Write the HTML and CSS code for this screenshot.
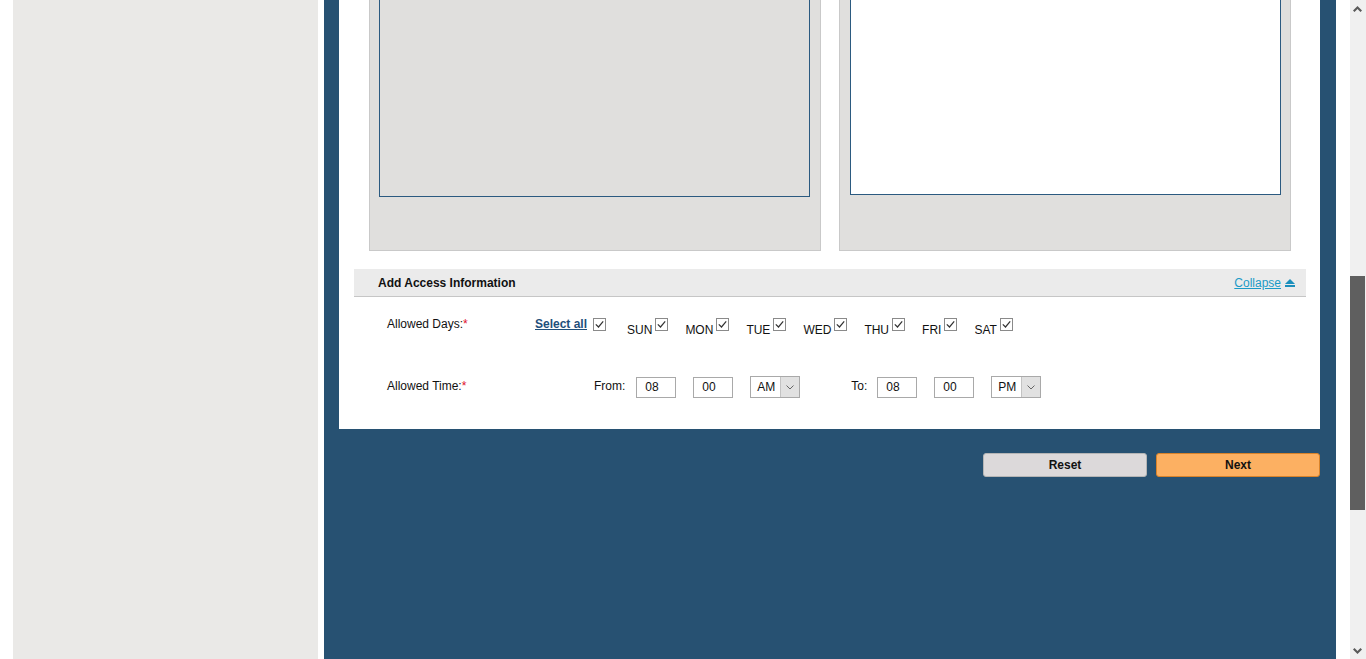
FILE: index.html
```html
<!DOCTYPE html>
<html lang="en">
<head>
<meta charset="utf-8">
<title>Add Access Information</title>
<link rel="stylesheet" href="styles.css">
</head>
<body>
<div class="page">
  <aside class="sidebar"></aside>
  <main class="main">
    <section class="card">
      <div class="panes">
        <div class="pane pane-left"><div class="list list-grey"></div></div>
        <div class="pane pane-right"><div class="list list-white"></div></div>
      </div>
      <div class="section">
        <div class="section-head">
          <span class="section-title">Add Access Information</span>
          <a class="collapse" href="#">Collapse</a>
          <svg class="collapse-icon" width="10" height="8" viewBox="0 0 10 8"><polygon points="5,0 10,5 0,5" fill="#1b8fbc"/><rect x="0" y="6" width="10" height="2" fill="#1b8fbc"/></svg>
        </div>
        <div class="form-row days-row">
          <div class="label">Allowed Days:<span class="req">*</span></div>
          <a class="select-all" href="#">Select all</a>
          <span class="cb sa-cb"><svg width="13" height="13" viewBox="0 0 13 13"><rect x="0.5" y="0.5" width="12" height="12" fill="#fff" stroke="#8a8a8a"/><path d="M2.8 6.3 L5.5 9 L10.2 3.3" fill="none" stroke="#333" stroke-width="1.2"/></svg></span>
          <div class="days">
            <div class="day"><span class="day-name">SUN</span><span class="cb"><svg width="13" height="13" viewBox="0 0 13 13"><rect x="0.5" y="0.5" width="12" height="12" fill="#fff" stroke="#8a8a8a"/><path d="M2.8 6.3 L5.5 9 L10.2 3.3" fill="none" stroke="#333" stroke-width="1.2"/></svg></span></div>
            <div class="day"><span class="day-name">MON</span><span class="cb"><svg width="13" height="13" viewBox="0 0 13 13"><rect x="0.5" y="0.5" width="12" height="12" fill="#fff" stroke="#8a8a8a"/><path d="M2.8 6.3 L5.5 9 L10.2 3.3" fill="none" stroke="#333" stroke-width="1.2"/></svg></span></div>
            <div class="day"><span class="day-name">TUE</span><span class="cb"><svg width="13" height="13" viewBox="0 0 13 13"><rect x="0.5" y="0.5" width="12" height="12" fill="#fff" stroke="#8a8a8a"/><path d="M2.8 6.3 L5.5 9 L10.2 3.3" fill="none" stroke="#333" stroke-width="1.2"/></svg></span></div>
            <div class="day"><span class="day-name">WED</span><span class="cb"><svg width="13" height="13" viewBox="0 0 13 13"><rect x="0.5" y="0.5" width="12" height="12" fill="#fff" stroke="#8a8a8a"/><path d="M2.8 6.3 L5.5 9 L10.2 3.3" fill="none" stroke="#333" stroke-width="1.2"/></svg></span></div>
            <div class="day"><span class="day-name">THU</span><span class="cb"><svg width="13" height="13" viewBox="0 0 13 13"><rect x="0.5" y="0.5" width="12" height="12" fill="#fff" stroke="#8a8a8a"/><path d="M2.8 6.3 L5.5 9 L10.2 3.3" fill="none" stroke="#333" stroke-width="1.2"/></svg></span></div>
            <div class="day"><span class="day-name">FRI</span><span class="cb"><svg width="13" height="13" viewBox="0 0 13 13"><rect x="0.5" y="0.5" width="12" height="12" fill="#fff" stroke="#8a8a8a"/><path d="M2.8 6.3 L5.5 9 L10.2 3.3" fill="none" stroke="#333" stroke-width="1.2"/></svg></span></div>
            <div class="day"><span class="day-name">SAT</span><span class="cb"><svg width="13" height="13" viewBox="0 0 13 13"><rect x="0.5" y="0.5" width="12" height="12" fill="#fff" stroke="#8a8a8a"/><path d="M2.8 6.3 L5.5 9 L10.2 3.3" fill="none" stroke="#333" stroke-width="1.2"/></svg></span></div>
          </div>
        </div>
        <div class="form-row time-row">
          <div class="label label-time">Allowed Time:<span class="req">*</span></div>
          <span class="txt from">From:</span>
          <div class="field">08</div>
          <div class="field">00</div>
          <div class="select"><span class="select-val">AM</span><span class="select-btn"><svg width="8" height="5" viewBox="0 0 8 5"><path d="M0.5 0.5 L4 4 L7.5 0.5" fill="none" stroke="#666" stroke-width="1"/></svg></span></div>
          <span class="txt to">To:</span>
          <div class="field">08</div>
          <div class="field">00</div>
          <div class="select"><span class="select-val">PM</span><span class="select-btn"><svg width="8" height="5" viewBox="0 0 8 5"><path d="M0.5 0.5 L4 4 L7.5 0.5" fill="none" stroke="#666" stroke-width="1"/></svg></span></div>
        </div>
      </div>
    </section>
    <div class="actions">
      <button class="btn btn-reset">Reset</button>
      <button class="btn btn-next">Next</button>
    </div>
  </main>
  <div class="spacer"></div>
  <div class="scrollbar">
    <div class="sb-arrow"><svg width="9" height="6" viewBox="0 0 9 6"><path d="M0 4.5 L4.5 0 L9 4.5 L7.5 6 L4.5 3 L1.5 6 Z" fill="#5a5a5a"/></svg></div>
    <div class="sb-track"><div class="sb-thumb"></div></div>
    <div class="sb-arrow"><svg width="9" height="6" viewBox="0 0 9 6"><path d="M0 1.5 L1.5 0 L4.5 3 L7.5 0 L9 1.5 L4.5 6 Z" fill="#5a5a5a"/></svg></div>
  </div>
</div>
</body>
</html>
```
FILE: styles.css
```css
html, body {
  margin: 0;
  padding: 0;
  background: #ffffff;
  overflow: hidden;
}

body {
  font-family: "Liberation Sans", Arial, sans-serif;
  font-size: 12px;
  color: #111;
}

.page {
  display: flex;
  height: 659px;
  width: 1366px;
}

.sidebar {
  margin-left: 13px;
  width: 305px;
  background: #eae9e7;
  flex: none;
}

.main {
  margin-left: 6px;
  width: 1012px;
  background: #275172;
  flex: none;
}

.card {
  margin-left: 15px;
  width: 981px;
  height: 429px;
  background: #ffffff;
}

.panes {
  display: flex;
  gap: 18px;
  padding: 0 29px 0 30px;
}

.pane {
  box-sizing: border-box;
  width: 452px;
  height: 251px;
  border: 1px solid #c9c9c9;
  border-top: none;
  background: #e0dfdd;
}

.pane-left {
  padding: 0 10px 0 9px;
}

.pane-right {
  padding: 0 9px 0 10px;
}

.list {
  border: 1px solid #2b5a80;
  border-top: none;
}

.list-grey {
  height: 196px;
  background: #e0dfdd;
}

.list-white {
  height: 194px;
  background: #ffffff;
}

.section {
  margin: 18px 0 0 15px;
  width: 952px;
}

.section-head {
  display: flex;
  align-items: center;
  height: 27px;
  background: #ebebeb;
  border-bottom: 1px solid #c6c6c6;
  padding: 0 11px 0 24px;
}

.section-title {
  font-weight: bold;
  color: #111;
  flex: 1;
}

.collapse {
  color: #1b9ac7;
  text-decoration: underline;
}

.collapse-icon {
  margin-left: 4px;
  margin-top: 1px;
}

.form-row {
  display: flex;
  padding-left: 33px;
}

.days-row {
  margin-top: 20px;
  height: 14px;
  align-items: flex-start;
  line-height: 14px;
}

.label {
  width: 148px;
  flex: none;
  color: #111;
}

.label-time {
  width: 207px;
}

.req {
  color: #e0102a;
}

.select-all {
  color: #1f4f7a;
  font-weight: bold;
  text-decoration: underline;
}

.cb {
  display: block;
  width: 13px;
  height: 13px;
}

.cb svg {
  display: block;
}

.sa-cb {
  margin-left: 6px;
  margin-top: 1px;
}

.days {
  display: flex;
  gap: 17px;
  margin-left: 21px;
}

.day {
  display: flex;
  align-items: flex-start;
  gap: 3px;
}

.day-name {
  margin-top: 6px;
  line-height: 14px;
}

.day .cb {
  margin-top: 1px;
}

.time-row {
  margin-top: 45px;
  height: 22px;
  align-items: center;
}

.time-row .label,
.txt {
  padding-bottom: 3px;
}

.from {
  margin-right: 11px;
}

.to {
  margin-left: 51px;
  margin-right: 10px;
}

.field {
  box-sizing: border-box;
  width: 40px;
  height: 21px;
  border: 1px solid #a9a9a9;
  padding-left: 8px;
  line-height: 19px;
  margin-right: 17px;
  background: #fff;
}

.select {
  box-sizing: border-box;
  display: flex;
  width: 50px;
  height: 22px;
  border: 1px solid #a9a9a9;
  background: #fff;
}

.select-val {
  flex: 1;
  padding-left: 6px;
  line-height: 20px;
}

.select-btn {
  width: 18px;
  background: #e1e1e1;
  border-left: 1px solid #c3c3c3;
  display: flex;
  align-items: center;
  justify-content: center;
}

.actions {
  display: flex;
  justify-content: flex-end;
  gap: 9px;
  padding-right: 16px;
  margin-top: 24px;
}

.btn {
  box-sizing: border-box;
  width: 164px;
  height: 24px;
  border-radius: 3px;
  font-family: "Liberation Sans", Arial, sans-serif;
  font-size: 12px;
  font-weight: bold;
  color: #111;
  padding: 0;
  cursor: pointer;
}

.btn-reset {
  background: #dcd9da;
  border: 1px solid #b5b5b5;
}

.btn-next {
  background: #fcb062;
  border: 1px solid #d9832a;
}

.spacer {
  width: 14px;
  flex: none;
}

.scrollbar {
  width: 16px;
  flex: none;
  background: #f0f0f0;
  display: flex;
  flex-direction: column;
}

.sb-arrow {
  height: 17px;
  display: flex;
  align-items: center;
  justify-content: center;
  padding-right: 1px;
}

.sb-track {
  flex: 1;
  padding-top: 259px;
}

.sb-thumb {
  width: 15px;
  height: 234px;
  background: #5f5f5f;
}
```
